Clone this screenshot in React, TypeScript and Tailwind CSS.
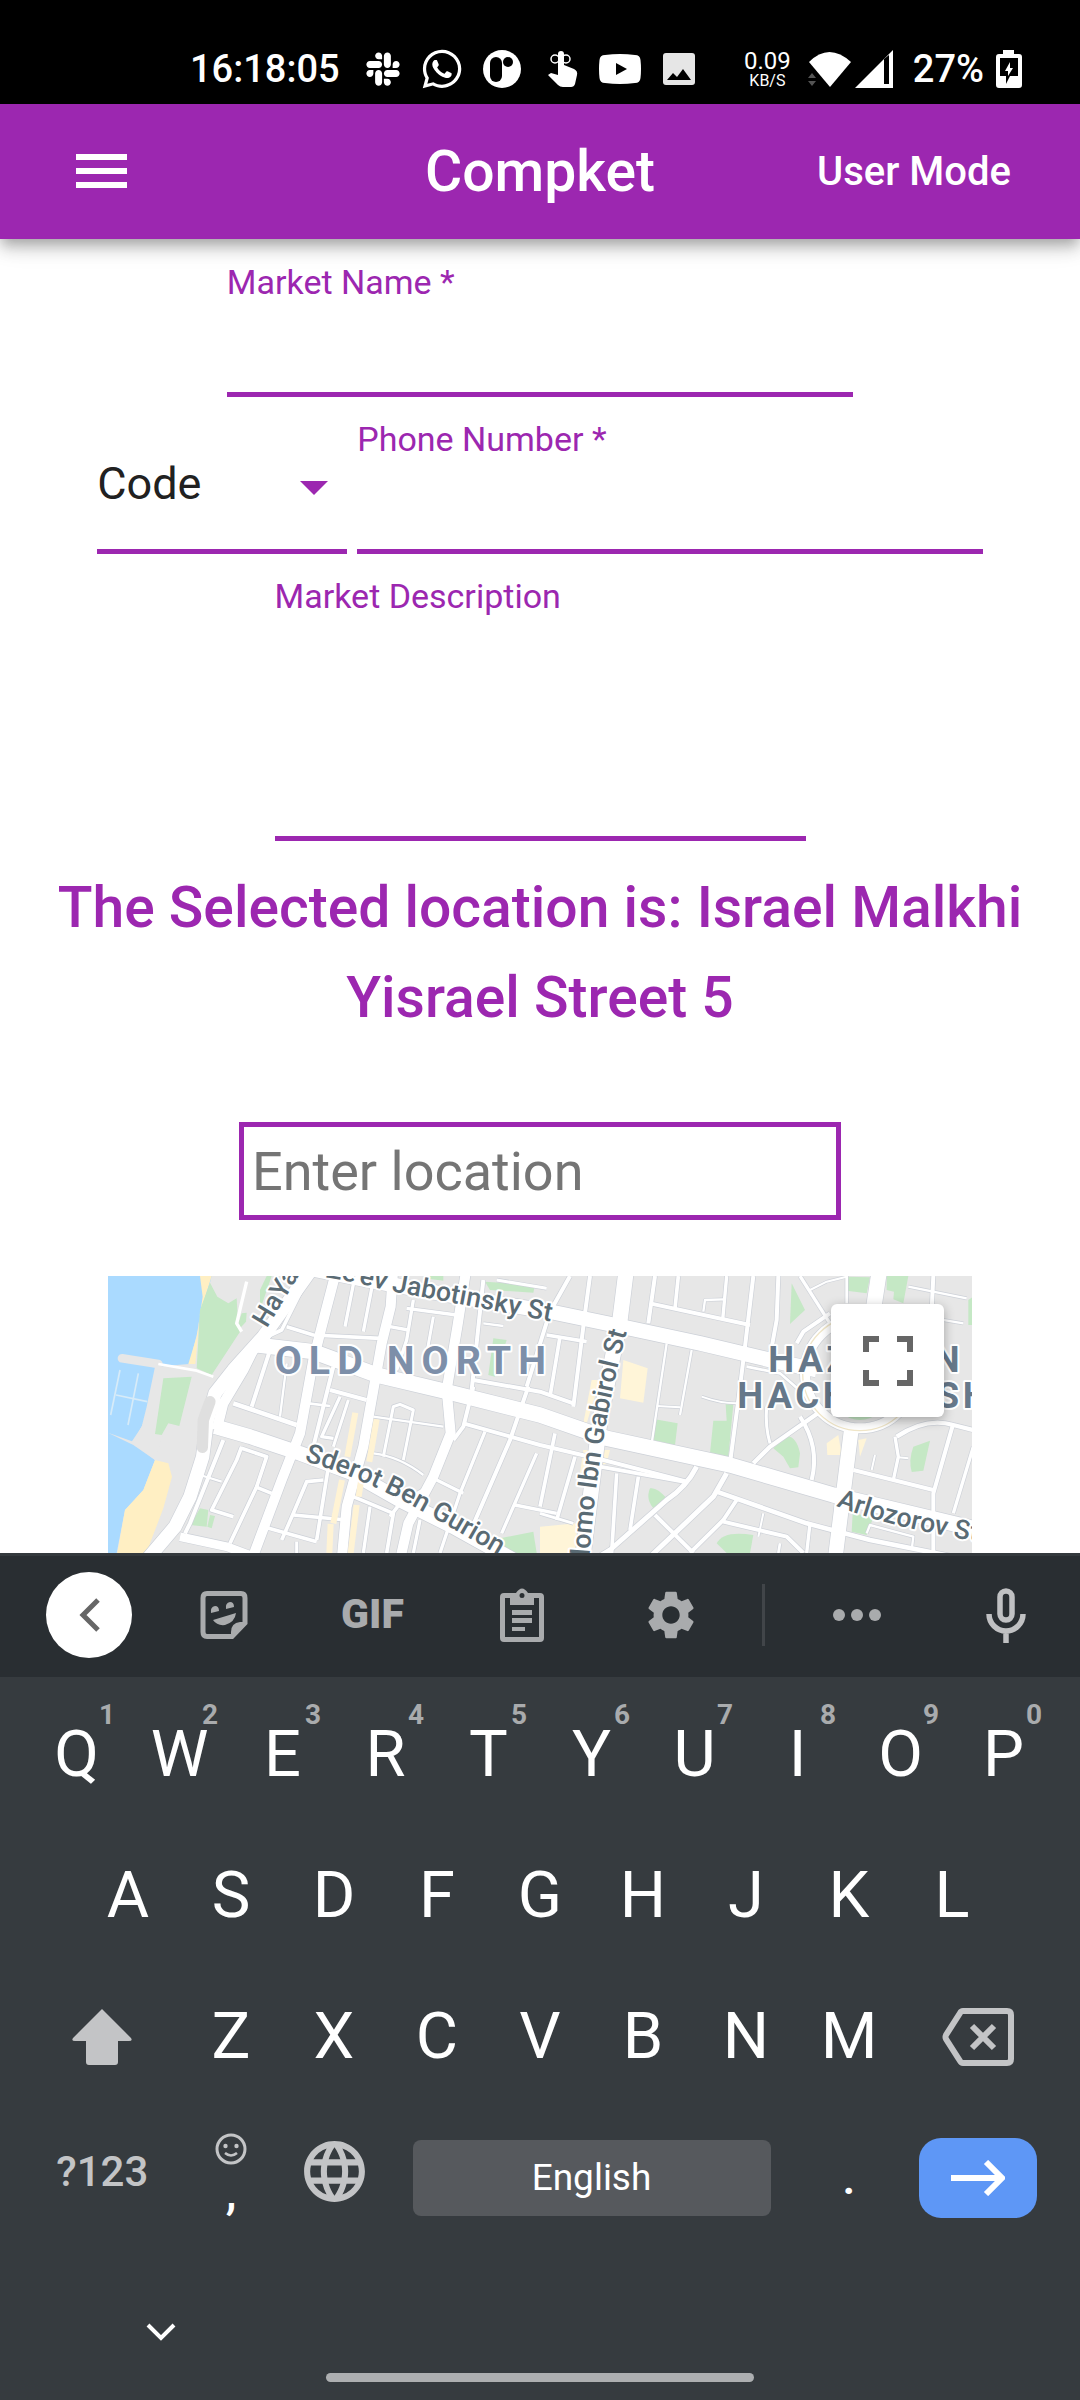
import { useState } from "react";
import type { ReactNode } from "react";
import { FaSlack, FaWhatsapp } from "react-icons/fa";
import { MdLanguage, MdSettings } from "react-icons/md";

const topRow = ["Q", "W", "E", "R", "T", "Y", "U", "I", "O", "P"];
const homeRow = ["A", "S", "D", "F", "G", "H", "J", "K", "L"];
const bottomRow = ["Z", "X", "C", "V", "B", "N", "M"];

// [path, stroke width]
const roads: [string, number][] = [
  // coast road
  ["M640 20L490 230L400 330L345 400L322 480L308 590L270 710L225 800L140 900", 40],
  ["M470 250L430 330L370 430L350 510", 30],
  ["M345 500L450 530L600 580L760 640L900 720L1060 800L1240 900", 44],
  ["M470 255L640 275L830 345L1040 395L1320 465L1520 535L1890 615L2200 705L2640 810", 46],
  ["M600 20L800 60L1100 115L1350 155L1520 190L1800 250L2010 300L2150 330", 44],
  ["M712 20L665 200L640 300L600 520L545 660L455 900", 30],
  ["M880 20L872 140L845 250L790 560L740 740L725 900", 30],
  ["M1100 20L1072 200L1040 390L1052 520L1000 650L925 790L900 900", 30],
  ["M1580 20L1560 180L1500 480L1450 879", 46],
  ["M2340 20L2320 150", 46],
  ["M2255 500L2205 900", 44],
  // thin streets
  ["M620 60L545 210L480 240", 11],
  ["M560 200L640 225L840 235", 11],
  ["M765 48L735 200", 10],
  ["M820 60L790 215", 10],
  ["M940 120L920 240L890 330", 10],
  ["M920 145L1070 165", 10],
  ["M870 200L925 210", 10],
  ["M1000 170L975 310", 9],
  ["M1150 60L1115 390", 12],
  ["M1190 60L1340 85", 9],
  ["M1150 190L1210 198", 7],
  ["M510 270L455 440", 12],
  ["M560 310L540 470", 7],
  ["M400 430L590 495", 14],
  ["M625 430L690 438", 8],
  ["M700 320L640 560", 12],
  ["M720 410L665 530L700 535", 10],
  ["M690 390L800 420", 12],
  ["M745 420L700 560", 9],
  ["M850 590L880 440L900 433L940 450L910 600", 9],
  ["M820 470L1030 500", 7],
  ["M820 580Q900 590 970 645", 7],
  ["M1120 380L1090 500L1060 540", 12],
  ["M1090 490L1320 555L1510 600L1760 665", 12],
  ["M1120 360L1320 395L1420 430", 12],
  ["M1285 380L1230 540L1100 840", 12],
  ["M1155 515L1080 700L1020 879", 10],
  ["M1310 580L1205 820", 10],
  ["M1010 660L1090 700", 10],
  ["M1245 735L1370 760", 10],
  ["M370 540L270 790L255 820", 12],
  ["M300 645L365 665", 7],
  ["M425 560L410 600L335 750L400 770", 11],
  ["M425 565L500 590L470 680L390 850", 11],
  ["M465 680L515 700", 11],
  ["M240 830L380 860L460 890", 26],
  ["M490 800L650 845", 11],
  ["M670 660L620 665L580 760L545 840", 11],
  ["M690 590L650 840", 11],
  ["M580 765L740 780", 11],
  ["M760 710L880 760L860 879", 11],
  ["M810 740L790 879", 10],
  ["M960 780L940 879", 10],
  ["M970 690L900 730L870 770", 11],
  ["M590 845L590 879", 9],
  // east side
  ["M1410 48L1350 155L1280 380", 12],
  ["M1470 48L1455 160L1420 440", 12],
  ["M1340 225L1460 245", 11],
  ["M1380 230L1350 410", 11],
  ["M1665 48L1645 190", 12],
  ["M1735 48L1725 145", 11],
  ["M1650 130L1950 195", 12],
  ["M1880 48L1868 180", 10],
  ["M1810 155L1815 120L1870 118", 7],
  ["M1960 48L1935 260L1915 420L1890 610", 12],
  ["M2035 48L2030 180L2010 290", 12],
  ["M1700 250L1655 550", 7],
  ["M1775 270L1740 465", 7],
  ["M1670 438L1740 442", 6],
  ["M1805 410Q1860 430 1910 430", 6],
  ["M2100 48L2190 190", 10],
  ["M2190 160L2110 215L2090 250", 12],
  ["M2130 90L2180 65L2240 50", 6],
  ["M2240 48L2240 130", 8],
  ["M2500 48L2495 150L2480 270", 12],
  ["M2425 80L2600 115", 7],
  ["M2470 170L2590 190", 7],
  ["M2160 455L2010 560L1960 610", 13],
  ["M2000 440Q1995 500 2010 550", 9],
  ["M2100 470Q2160 560 2135 660", 12],
  ["M2190 470L2040 340L1940 320", 8],
  ["M2390 530Q2480 470 2560 495L2640 515", 13],
  ["M2385 530L2395 590L2380 660", 10],
  ["M2395 592L2425 595", 6],
  ["M2260 630L2500 690", 12],
  ["M2560 490L2500 700L2500 879", 12],
  ["M2620 560L2560 760", 10],
  ["M2325 585L2315 630", 6],
  ["M1365 520L1320 740", 11],
  ["M1425 590L1370 780", 11],
  ["M1550 640L1535 879", 11],
  ["M1615 650L1590 810", 11],
  ["M1500 620L1750 665", 11],
  ["M1790 620Q1760 680 1700 720L1530 870L1480 900", 15],
  ["M1880 640L1840 710L1640 900", 15],
  ["M1850 695L2120 790L2310 840L2560 890", 14],
  ["M1665 765L1780 879", 12],
  ["M1910 720L1870 780L1770 879", 12],
  ["M1870 785L2060 830L2110 879", 12],
  ["M1990 760L1975 830", 6],
  ["M2130 790L2120 879", 10],
  ["M2040 850L2035 879", 8],
  ["M2300 820L2310 795L2440 830L2435 870", 7],
  ["M1320 760L1420 790", 9],
];

const parks = [
  "M330 68L352 110L385 130L410 115L415 200L420 215L335 345L290 325L300 150Z",
  "M190 355L275 350L238 498L205 490L185 525L165 522Z",
  "M425 160L440 158L438 185L420 205L415 190Z",
  "M480 90L500 48L515 48L480 150Z",
  "M300 745L325 750L320 800L270 795Z",
  "M330 765L345 768L335 805L322 800Z",
  "M970 48H1030V62L975 55Z",
  "M1155 65L1305 75L1300 98L1170 90Z",
  "M1180 235L1220 240L1185 350L1165 345Z",
  "M1200 835L1300 815L1310 879H1220Z",
  "M2075 70L2115 150L2070 192Z",
  "M2240 50L2310 52L2300 100L2240 92Z",
  "M2360 48H2425L2410 130L2380 118L2382 95L2360 90Z",
  "M2605 120L2620 110V195H2605Z",
  "M1665 478L1733 490L1725 555L1657 540Z",
  "M1877 433H1900L1885 590L1830 580L1840 482H1880Z",
  "M2060 528Q2090 530 2100 580L2095 622L2070 625L2050 590L2020 565Z",
  "M2440 560L2490 542L2470 632L2435 636Q2425 600 2440 560Z",
  "M1650 685Q1670 680 1700 715L1665 750Q1635 720 1650 685Z",
  "M2258 760L2320 772L2300 825L2255 815Z",
  "M1850 850Q1870 810 1960 825L1950 879H1880Z",
];

const piers = ["M60 330L32 465", "M115 340L84 495", "M48 405L142 425"];

function CityMap() {
  return (
    <svg
      viewBox="24 48 2592 831"
      preserveAspectRatio="xMidYMin slice"
      className="block h-full w-full bg-[#e7e7e7] font-[Roboto,sans-serif]"
      role="img"
      aria-label="Map"
    >
      <path d="M24 48H335L268 312L165 320L140 440L125 500L95 545L165 600L130 690L75 750L50 879H24Z" fill="#aadaff" />
      <path d="M300 48H335L325 80L300 160L286 312L265 312L290 230L308 110Z" fill="#ffefc3" />
      <path d="M165 600L205 610L216 650L190 745L150 850L140 879H52L75 750L130 690Z" fill="#ffefc3" />
      <path d="M66 295L175 312" stroke="#e7e7e7" strokeWidth="26" strokeLinecap="round" />
      <path d="M24 518L100 555L165 600L190 520L130 490L100 545Z" fill="#e7e7e7" />
      {piers.map((d) => (
        <path key={d} d={d} stroke="#d7ebf8" strokeWidth="5" />
      ))}
      {parks.map((d) => (
        <path key={d} d={d} fill="#c5e8c5" />
      ))}
      <g fill="#fff5d8">
        <path d="M1570 300L1643 325L1630 428L1560 415Z" />
        <path d="M1475 360H1500L1460 490H1450Z" />
        <path d="M1450 570H1530L1520 610L1440 640Z" />
        <path d="M2180 550L2215 525L2225 585H2182Z" />
        <path d="M1320 800L1430 790L1430 879H1320Z" />
        <path d="M2275 540L2300 535L2280 590Z" />
      </g>
      <g fill="none" strokeLinejoin="round">
        {roads.map(([d, w]) => (
          <path key={d} d={d} stroke="#cdd1d8" strokeWidth={w + 4} />
        ))}
        <circle cx="2280" cy="340" r="165" stroke="#cdd1d8" strokeWidth="34" />
        {roads.map(([d, w]) => (
          <path key={d} d={d} stroke="#fff" strokeWidth={w} />
        ))}
        <circle cx="2280" cy="340" r="165" stroke="#fff" strokeWidth="30" />
        <circle cx="2280" cy="340" r="172" stroke="#f0e6c8" strokeWidth="4" />
        <path d="M175 312L290 332L340 350" stroke="#fff" strokeWidth="8" />
        <path d="M440 65L410 190L425 215" stroke="#fff" strokeWidth="10" />
        <path d="M330 425L310 480L307 562" stroke="#dfdfdf" strokeWidth="34" strokeLinecap="round" />
        <path d="M766 458L742 590M726 660L700 790M692 792L688 879M830 478L808 605M785 650L776 710M770 735L752 879" stroke="#fff3d4" strokeWidth="18" />
      </g>
      <circle cx="2280" cy="400" r="80" fill="#c5e8c5" />

      <defs>
        <path id="hayarkon" d="M500 206L625 0" />
        <path id="jabotinsky" d="M560 38Q720 52 845 88L1352 184" />
        <path id="gurion" d="M612 602Q800 660 960 750T1320 960" />
        <path id="gabirol" d="M1460 1030Q1470 800 1500 600T1580 215" />
        <path id="arlozorov" d="M2208 738Q2400 814 2740 860" />
      </defs>
      <g fill="#5a6b74" stroke="#fff" strokeWidth="12" strokeLinejoin="round" paintOrder="stroke" fontSize="80" fontWeight="500">
        <text>
          <textPath href="#hayarkon">HaYarkon</textPath>
        </text>
        <text textAnchor="end">
          <textPath href="#jabotinsky" startOffset="100%">
            Ze'ev Jabotinsky St
          </textPath>
        </text>
        <text>
          <textPath href="#gurion">Sderot Ben Gurion</textPath>
        </text>
        <text textAnchor="end">
          <textPath href="#gabirol" startOffset="100%">
            Shlomo Ibn Gabirol St
          </textPath>
        </text>
        <text>
          <textPath href="#arlozorov">Arlozorov St</textPath>
        </text>
      </g>
      <g stroke="#fff" strokeWidth="12" strokeLinejoin="round" paintOrder="stroke" fontWeight="700">
        <text x="524" y="342" fontSize="118" fill="#7d8fa9" className="tracking-[0.18em]">
          OLD NORTH
        </text>
        <g fontSize="110" fill="#66788a">
          <text x="2005" y="335" className="tracking-widest">
            HAZAFON
          </text>
          <text x="1912" y="444" className="tracking-widest">
            HACHADASH
          </text>
        </g>
      </g>
    </svg>
  );
}

function StatusBar() {
  return (
    <div className="flex h-[104px] items-center justify-between bg-black pt-[34px] pr-[58px] pl-[190px] text-white">
      <div className="flex items-center">
        <span className="text-[38px] leading-none font-medium">16:18:05</span>
        <FaSlack className="ml-6 size-[38px]" />
        <FaWhatsapp className="ml-[18px] size-[44px]" />
        <svg viewBox="0 0 38 38" className="ml-[19px] size-[38px]">
          <circle cx="19" cy="19" r="19" fill="#fff" />
          <rect x="7" y="7" width="12" height="25" rx="6" />
          <circle cx="25" cy="12" r="5" />
        </svg>
        <svg viewBox="0 0 30 36" className="ml-[27px] h-[36px] w-[30px]" fill="#fff">
          <path d="M10 3Q10 0 13 0Q16 0 16 3V14L26 18Q30 20 29 24L27 33Q26 36 23 36H15Q12 36 10 34L0 24L3 22L10 24Z" />
          <ellipse cx="7" cy="8" rx="4" ry="4" fill="none" stroke="#fff" strokeWidth="1.5" />
          <ellipse cx="18" cy="8" rx="4" ry="4" fill="none" stroke="#fff" strokeWidth="1.5" />
        </svg>
        <svg viewBox="0 0 42 30" className="ml-[21px] h-[30px] w-[42px]">
          <path d="M6 1Q21 -1 36 1Q41 1 41.500 6Q42.500 15 41.500 24Q41 29 36 29Q21 31 6 29Q1 29 .5 24Q-.5 15 .5 6Q1 1 6 1Z" fill="#fff" />
          <path d="M17 9L28 15L17 21Z" />
        </svg>
        <svg viewBox="0 0 32 32" className="ml-[22px] size-[32px]">
          <rect width="32" height="32" rx="3" fill="#e6e6e6" />
          <path d="M4 27L10 20L14 24L20 16L28 27Z" />
        </svg>
      </div>
      <div className="flex items-center">
        <div className="flex flex-col items-center">
          <span className="text-[24px] leading-[24px]">0.09</span>
          <span className="text-[16px] leading-[16px]">KB/S</span>
        </div>
        <svg viewBox="0 0 44 38" className="ml-[17px] h-[38px] w-[44px]">
          <path d="M1 12Q21 -8 43 12L22 37Z" fill="#fff" />
          <path d="M0 28L4 23L8 28ZM0 31H8L4 36Z" fill="#555" />
        </svg>
        <svg viewBox="0 0 38 38" className="ml-[3px] size-[38px]">
          <path d="M38 0V38H0Z" fill="#fff" />
          <path d="M29 9L34 5V34H29Z" />
        </svg>
        <span className="ml-[20px] text-[38px] leading-none font-medium">27%</span>
        <svg viewBox="0 0 26 38" className="ml-[12px] h-[38px] w-[26px]">
          <path d="M7 0H18V4H23Q26 4 26 7V35Q26 38 23 38H3Q0 38 0 35V7Q0 4 3 4H7Z" fill="#fff" />
          <path d="M4 8H22V26H14L10 34V26H4Z" />
          <path d="M14 12L9 21H12V26L17 18H14Z" fill="#fff" />
        </svg>
      </div>
    </div>
  );
}

function Key({ children, hint, wide, label }: { children: ReactNode; hint?: string; wide?: boolean; label?: string }) {
  return (
    <button
      type="button"
      aria-label={label}
      className={`relative flex h-[141px] items-center justify-center text-[65px] text-white ${wide ? "col-span-3" : "col-span-2"}`}
    >
      {children}
      {hint && (
        <span className="absolute top-[15px] right-[13px] text-[28px] leading-[32px] font-bold text-[#a9abad]">{hint}</span>
      )}
    </button>
  );
}

function Toolbar() {
  const item = "flex h-full flex-1 items-center justify-center";

  return (
    <div className="flex h-[124px] items-center border-t-[3px] border-[#34393d] bg-[#292e32] pb-[3px] pl-[29px] text-[#a9abad]">
      <div className="flex w-[120px] items-center justify-center">
        <button type="button" aria-label="Back" className="flex size-[86px] items-center justify-center rounded-full bg-white">
          <svg viewBox="0 0 21 34" className="h-[34px] w-[21px]" fill="none" stroke="#666" strokeWidth="5">
            <path d="M19 2L4 17L19 32" />
          </svg>
        </button>
      </div>
      <button type="button" aria-label="Stickers" className={item}>
        <svg viewBox="0 0 48 48" className="size-[48px]" fill="currentColor">
          <path d="M7 2.500H41Q45 2.500 45 7V32L32 45.500H7Q3 45.500 3 41V7Q3 2.500 7 2.500Z" fill="none" stroke="currentColor" strokeWidth="5" />
          <path d="M45 31H40Q31 32 31 41V46Z" />
          <path d="M11 22Q10 16 15 15Q19 15 19 20ZM26 18Q25 12 30 11Q34 11 34 16ZM13 29L36 22Q35 31 25 34Q17 35 13 29Z" />
        </svg>
      </button>
      <button type="button" className={`${item} text-[41px] font-black`}>
        GIF
      </button>
      <button type="button" aria-label="Clipboard" className={item}>
        <svg viewBox="0 0 44 54" className="h-[54px] w-[44px]" fill="currentColor">
          <path fillRule="evenodd" d="M16 5Q22 -4 28 5H40Q44 5 44 9V50Q44 54 40 54H4Q0 54 0 50V9Q0 5 4 5ZM5 10V49H39V10H34V17H10V10ZM22 5A2.500 2.500 0 1 0 22 10A2.500 2.500 0 1 0 22 5Z" />
          <path d="M12 22H32V27H12ZM12 30H32V35H12ZM12 39H25V43H12Z" />
        </svg>
      </button>
      <button type="button" aria-label="Settings" className={item}>
        <MdSettings className="size-[58px]" />
      </button>
      <div className="mx-[17px] h-[62px] w-[3px] bg-[#414549]" />
      <button type="button" aria-label="More" className={item}>
        <svg viewBox="0 0 48 12" className="h-[12px] w-[48px]" fill="currentColor">
          <circle cx="6" cy="6" r="6" />
          <circle cx="24" cy="6" r="6" />
          <circle cx="42" cy="6" r="6" />
        </svg>
      </button>
      <button type="button" aria-label="Voice input" className={`${item} text-[#c0c1c3]`}>
        <svg viewBox="0 0 40 55" className="h-[55px] w-[40px]" fill="none" stroke="currentColor" strokeWidth="5.5">
          <rect x="14" y="3" width="12" height="29" rx="6" />
          <path d="M3 26A17 17 0 0 0 37 26M20 43V55" />
        </svg>
      </button>
    </div>
  );
}

function Keyboard() {
  return (
    <div className="relative z-10 bg-[#363b3f]">
      <Toolbar />
      <div className="grid grid-cols-20 px-[25px] pt-[7px]">
        {topRow.map((key, i) => (
          <Key key={key} hint={String((i + 1) % 10)}>
            {key}
          </Key>
        ))}
        <span />
        {homeRow.map((key) => (
          <Key key={key}>{key}</Key>
        ))}
        <span />
        <Key wide label="Shift">
          <svg viewBox="0 0 60 56" className="h-[56px] w-[60px]" fill="#c3c4c6">
            <path d="M30 0L59 29Q61 32 57 32H46V53Q46 56 43 56H17Q14 56 14 53V32H3Q-1 32 1 29Z" />
          </svg>
        </Key>
        {bottomRow.map((key) => (
          <Key key={key}>{key}</Key>
        ))}
        <Key wide label="Backspace">
          <svg viewBox="0 0 72 58" className="h-[58px] w-[72px]" fill="none" stroke="#c3c4c6" strokeWidth="6">
            <path d="M21 3H65Q69 3 69 7V51Q69 55 65 55H21Q19 55 18 53L4 31Q3 29 4 27L18 5Q19 3 21 3Z" />
            <path d="M30 18L52 40M52 18L30 40" />
          </svg>
        </Key>
        <Key wide>
          <span className="pb-3 text-[42px] font-medium text-[#c3c4c6]">?123</span>
        </Key>
        <Key>
          <span className="flex flex-col items-center gap-2 pb-3">
            <svg viewBox="0 0 32 32" className="size-[32px]" fill="#c3c4c6">
              <circle cx="16" cy="16" r="14" fill="none" stroke="#c3c4c6" strokeWidth="3" />
              <circle cx="10.500" cy="13" r="2.200" />
              <circle cx="21.500" cy="13" r="2.200" />
              <path d="M10 20Q16 25 22 20" fill="none" stroke="#c3c4c6" strokeWidth="2.500" />
            </svg>
            <span className="text-[48px] leading-[38px] font-medium">,</span>
          </span>
        </Key>
        <Key label="Change language">
          <span className="pb-3">
            <MdLanguage className="size-[73px] text-[#c3c4c6]" />
          </span>
        </Key>
        <button
          type="button"
          className="col-span-8 mx-[27px] h-[76px] self-center rounded-lg bg-[#56595d] text-[37px] text-white"
        >
          English
        </button>
        <Key>
          <span className="text-[48px] font-medium">.</span>
        </Key>
        <Key wide label="Next">
          <span className="flex h-[80px] w-[118px] items-center justify-center rounded-[22px] bg-[#5e97f6]">
            <svg viewBox="0 0 54 36" className="h-[36px] w-[54px]" fill="none" stroke="#fff" strokeWidth="6">
              <path d="M0 18H50M35 2L51 18L35 34" />
            </svg>
          </span>
        </Key>
      </div>
      <div className="flex h-[152px] flex-col justify-between pt-[75px] pb-[18px]">
        <button type="button" aria-label="Hide keyboard" className="ml-[146px] w-[30px]">
          <svg viewBox="0 0 30 18" className="h-[18px] w-[30px]" fill="none" stroke="#fff" strokeWidth="4">
            <path d="M2 2L15 15L28 2" />
          </svg>
        </button>
        <div className="mx-auto h-[9px] w-[428px] rounded-full bg-[#adafb1]" />
      </div>
    </div>
  );
}

export default function App() {
  const [code, setCode] = useState("");
  const label = "block text-[34px] leading-[40px] text-[#9c27b0]";
  const field = "block w-full border-b-[5px] border-[#9c27b0] bg-transparent text-[45px] outline-none";

  return (
    <div className="flex min-h-screen flex-col overflow-hidden bg-white font-[Roboto,sans-serif]">
      <StatusBar />
      <header className="relative z-10 grid h-[135px] grid-cols-3 items-center bg-[#9c27b0] px-[69px] text-white shadow-[0_6px_11px_-3px_rgba(0,0,0,0.2),0_11px_14px_0_rgba(0,0,0,0.14),0_3px_28px_0_rgba(0,0,0,0.12)]">
        <button type="button" aria-label="Menu" className="justify-self-start pl-[7px]">
          <svg viewBox="0 0 51 35" className="h-[35px] w-[51px]" fill="#fff">
            <path d="M0 0H51V6H0ZM0 14H51V20H0ZM0 28H51V34H0Z" />
          </svg>
        </button>
        <h1 className="text-center text-[57px] font-medium">Compket</h1>
        <button type="button" className="justify-self-end text-[40px] font-medium">
          User Mode
        </button>
      </header>

      <main className="flex flex-1 flex-col items-center pt-[23px]">
        <div className="w-[58%]">
          <label htmlFor="market-name" className={label}>
            Market Name *
          </label>
          <input id="market-name" className={`${field} h-[95px]`} />
        </div>

        <div className="mt-[22px] flex w-[82%] gap-[10px]">
          <div className="relative w-[250px]">
            <select
              aria-label="Code"
              value={code}
              onChange={(e) => setCode(e.target.value)}
              className={`${field} h-full appearance-none text-[#212121]`}
            >
              <option value="">Code</option>
              <option value="050">050</option>
              <option value="052">052</option>
              <option value="054">054</option>
            </select>
            <svg viewBox="0 0 28 14" className="pointer-events-none absolute top-[62px] right-[19px] h-[14px] w-[28px]" fill="#9c27b0">
              <path d="M0 0H28L14 14Z" />
            </svg>
          </div>
          <div className="flex-1">
            <label htmlFor="phone" className={label}>
              Phone Number *
            </label>
            <input id="phone" type="tel" className={`${field} h-[95px]`} />
          </div>
        </div>

        <div className="mt-[22px] w-[531px]">
          <label htmlFor="description" className={label}>
            Market Description
          </label>
          <textarea id="description" className={`${field} h-[225px] resize-none`} />
        </div>

        <h2 className="mt-[22px] px-10 text-center text-[57px] leading-[90px] font-medium text-[#9c27b0]">
          The Selected location is: Israel Malkhi Yisrael Street 5
        </h2>

        <input
          aria-label="Enter location"
          placeholder="Enter location"
          className="mt-[79px] h-[98px] w-[602px] border-[5px] border-[#9c27b0] px-[8px] text-[54px] outline-none placeholder:text-[#757575]"
        />

        <div className="relative mt-[56px] h-[277px] w-[80%] overflow-hidden">
          <CityMap />
          <button
            type="button"
            aria-label="Toggle fullscreen"
            className="absolute top-[28px] right-[28px] flex size-[113px] items-center justify-center rounded-[6px] bg-white shadow-[0_3px_11px_0_rgba(0,0,0,0.3)]"
          >
            <svg viewBox="0 0 50 50" className="size-[50px]" fill="none" stroke="#666" strokeWidth="6">
              <path d="M3 16V3H16M34 3H47V16M47 34V47H34M16 47H3V34" />
            </svg>
          </button>
        </div>
      </main>

      <Keyboard />
    </div>
  );
}
